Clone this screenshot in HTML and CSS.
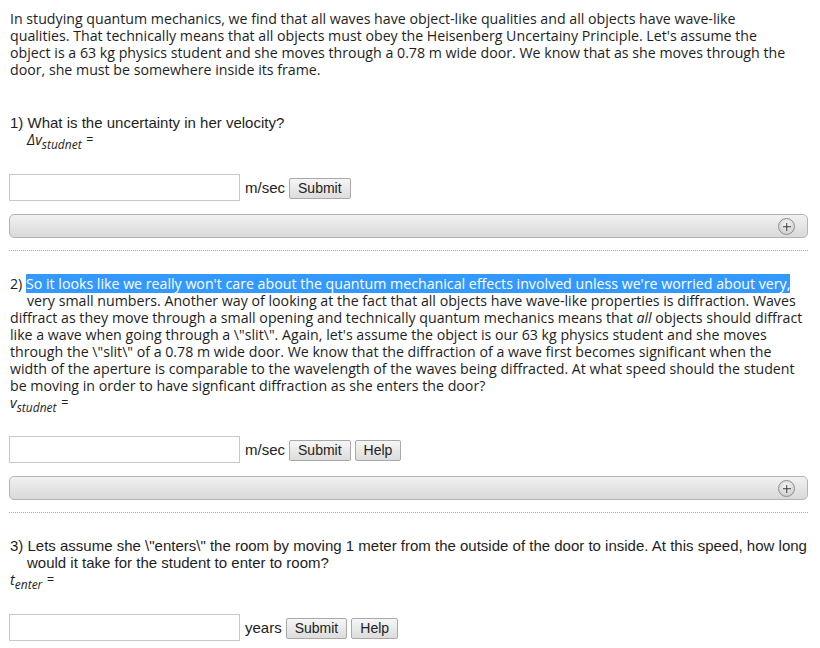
FILE: index.html
```html
<!DOCTYPE html>
<html>
<head>
<meta charset="utf-8">
<link rel="stylesheet" href="styles.css">
</head>
<body>
<div class="page">
  <p class="intro">In studying quantum mechanics, we find that all waves have object-like qualities and all objects have wave-like<br>qualities. That technically means that all objects must obey the Heisenberg Uncertainy Principle. Let's assume the<br>object is a 63 kg physics student and she moves through a 0.78 m wide door. We know that as she moves through the<br>door, she must be somewhere inside its frame.</p>

  <section class="problem p1">
    <div class="qhead sans">1) What is the uncertainty in her velocity?</div>
    <div class="var indent"><i>&Delta;v</i><sub>studnet</sub> <span class="eq">=</span></div>
    <div class="answer">
      <input class="field" type="text">
      <span class="unit">m/sec</span>
      <button class="btn">Submit</button>
    </div>
    <div class="hintbar"><span class="plus"></span></div>
  </section>
  <div class="divider"></div>

  <section class="problem p2">
    <div class="qhead">2) <span class="sel">So it looks like we really won't care about the quantum mechanical effects involved unless we're worried about very, </span><br>very small numbers. Another way of looking at the fact that all objects have wave-like properties is diffraction. Waves</div>
    <div class="qbody">diffract as they move through a small opening and technically quantum mechanics means that <i>all</i> objects should diffract<br>like a wave when going through a \"slit\". Again, let's assume the object is our 63 kg physics student and she moves<br>through the \"slit\" of a 0.78 m wide door. We know that the diffraction of a wave first becomes significant when the<br>width of the aperture is comparable to the wavelength of the waves being diffracted. At what speed should the student<br>be moving in order to have signficant diffraction as she enters the door?</div>
    <div class="var"><i>v</i><sub>studnet</sub> <span class="eq">=</span></div>
    <div class="answer">
      <input class="field" type="text">
      <span class="unit">m/sec</span>
      <button class="btn">Submit</button>
      <button class="btn">Help</button>
    </div>
    <div class="hintbar"><span class="plus"></span></div>
  </section>
  <div class="divider"></div>

  <section class="problem p3">
    <div class="qhead sans">3) Lets assume she \"enters\" the room by moving 1 meter from the outside of the door to inside. At this speed, how long<br>would it take for the student to enter to room?</div>
    <div class="var"><i>t</i><sub>enter</sub> <span class="eq">=</span></div>
    <div class="answer">
      <input class="field" type="text">
      <span class="unit">years</span>
      <button class="btn">Submit</button>
      <button class="btn">Help</button>
    </div>
  </section>
</div>
</body>
</html>
```
FILE: styles.css
```css
html,body{margin:0;padding:0;background:#fff}
body{color:#1e1e1e;font-family:"Open Sans","DejaVu Sans",sans-serif;font-size:14.2px;line-height:17px}
.page{padding:10px 9px 0 9px}
.intro{margin:0 0 0 1px;white-space:nowrap}
.problem{display:flex;flex-direction:column;margin-left:1px}
.p1{margin-top:36px}
.p2,.p3{margin-top:24px}
.qhead{white-space:nowrap;padding-left:17px;text-indent:-17px}
.qbody{white-space:nowrap}
.sans{font-family:"Liberation Sans",Arial,sans-serif;font-size:15px}
.sel{background:#3399ff;color:#fff}
.var{height:20px;line-height:17px;white-space:nowrap}
.var i{font-size:14.5px}
.var sub{font-style:italic;font-size:12px;vertical-align:-4px;line-height:0}
.var .eq{font-family:"Liberation Sans",Arial,sans-serif;font-size:12px;vertical-align:2px;margin-left:1px}
.indent{padding-left:17px}
.answer{display:flex;align-items:center;gap:4px;margin:22px 0 0 -1px;height:27px}
.p1 .answer{margin-top:23px}
.p3 .answer{margin-top:23px}
.field{box-sizing:border-box;width:231px;height:27px;margin:0;border:1px solid #c8c8c8;background:#fff;padding:0 4px}
.unit{font-family:"Liberation Sans",Arial,sans-serif;font-size:15px;color:#222;margin-left:1px}
.btn{box-sizing:border-box;height:21px;padding:0 8px;margin:1px 0 0 0;border:1px solid #a9a9a9;border-radius:2px;background:linear-gradient(#f6f6f6,#dcdcdc);font-family:"Liberation Sans",Arial,sans-serif;font-size:14px;color:#222;line-height:19px}
.hintbar{position:relative;box-sizing:border-box;margin:13px 0 0 -1px;width:799px;height:24px;border:1px solid #b4b4b4;border-radius:5px;background:linear-gradient(#f1f1f1,#d9d9d9)}
.plus{position:absolute;right:12px;top:3px;width:15px;height:15px;border:1px solid #8e8e8e;border-radius:50%;background:radial-gradient(circle at 50% 35%,#f6f6f6,#c4c4c4)}
.plus::before,.plus::after{content:"";position:absolute;background:#3a3a3a;left:50%;top:50%}
.plus::before{width:8px;height:1.5px;transform:translate(-50%,-50%)}
.plus::after{width:1.5px;height:8px;transform:translate(-50%,-50%)}
.divider{margin:12px 0 0 0;width:799px;border-top:1px dotted #a8a8a8}
```
